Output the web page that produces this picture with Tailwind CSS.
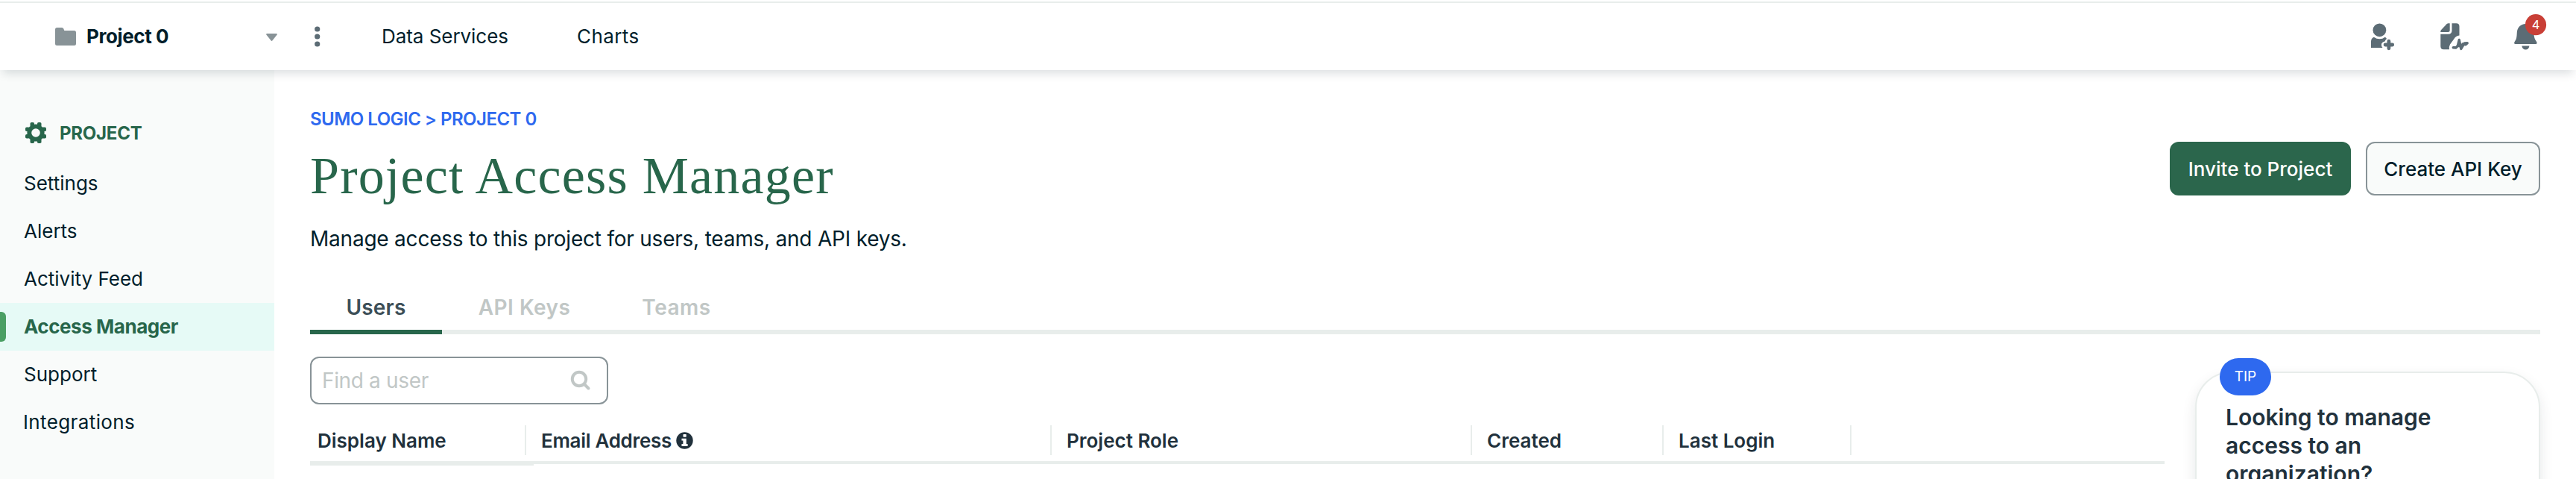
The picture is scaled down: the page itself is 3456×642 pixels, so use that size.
<!DOCTYPE html>
<html lang="en">
<head>
<meta charset="utf-8">
<title>Project Access Manager</title>
<script src="https://cdn.jsdelivr.net/npm/@tailwindcss/browser@4"></script>
</head>
<body class="bg-white">
<div class="flex flex-col h-[642px] w-[3456px] overflow-hidden font-['Inter','Liberation_Sans',sans-serif] text-[26px] text-[#001e2b]">

  <header class="relative z-10 mt-[2px] flex h-[92px] shrink-0 items-center border-t-2 border-[#e8edeb] bg-white pl-[74px] pr-[39px] shadow-[0_8px_12px_-4px_rgba(0,30,43,0.15)]">
    <svg class="w-7 h-6 fill-[#889397]" viewBox="0 0 28 24"><path d="M2.500 0H9a2.500 2.500 0 0 1 2.300 1.600L12.300 4H25.500A2.500 2.500 0 0 1 28 6.500V21.500A2.500 2.500 0 0 1 25.500 24H2.500A2.500 2.500 0 0 1 0 21.500V2.500A2.500 2.500 0 0 1 2.500 0Z"/></svg>
    <span class="-mt-px ml-[14px] w-[241px] font-bold tracking-[-0.4px]">Project 0</span>
    <svg class="mt-0.5 w-[15px] h-2.5 fill-[#889397]" viewBox="0 0 15 10"><path d="M1.300 0H13.700Q15.500 0.300 14.500 1.800L8.500 9.300Q7.500 10.500 6.500 9.300L0.500 1.800Q-0.500 0.300 1.300 0Z"/></svg>
    <svg class="ml-[50px] w-2 h-7 fill-[#5c6c75]" viewBox="0 0 8 28"><circle cx="3.700" cy="4" r="3.600"/><circle cx="3.700" cy="14" r="3.600"/><circle cx="3.700" cy="24" r="3.600"/></svg>
    <a class="-mt-px ml-[82px] w-[262px] tracking-[-0.05px]">Data Services</a>
    <a class="-mt-px tracking-[0.4px]">Charts</a>

    <div class="ml-auto -mt-1 flex gap-[58px] text-[#5c6c75]">
      <svg class="w-9 h-12" viewBox="14 8 36 48" fill="currentColor">
        <circle cx="27.400" cy="25.300" r="8.900"/>
        <path d="M16 49V40.500Q16 36.500 19.800 34.700Q23.500 37.200 27.500 37.200Q31.500 37.200 34.800 34.700Q36.500 35.500 37 37Q35 38.500 34.500 40.500Q31 41 30 44Q29.500 46.500 31.500 49Z"/>
        <path d="M39.900 40.200V49.800M35.100 45H44.700" fill="none" stroke="currentColor" stroke-width="4.800" stroke-linecap="round"/>
      </svg>
      <svg class="w-10 h-12" viewBox="108 8 40 48" fill="currentColor">
        <path d="M109.300 28V27Q109.300 26 110.200 25L117.500 17.200Q118.500 16.200 120 16.200H121.700V25.500Q121.700 28 119.200 28Z"/>
        <path d="M124.500 16.200H130.300Q134.500 16.200 134.500 20.400V32.500Q129.500 33 127.500 37L122 44.500Q120 48.500 121 51.300H113.500Q109.300 51.300 109.300 47.100V30.800H119.500Q124.500 30.800 124.500 25.800Z"/>
        <path d="M126.300 48.700Q131.500 49 132.500 46L134.300 38.500L136.800 50.500L141.300 43L145.200 42.800L143 44.800L139 44L137.500 49L135 46.500L132 46.500L130 49Z" stroke="currentColor" stroke-width="3.400" stroke-linejoin="round" stroke-linecap="round"/>
      </svg>
      <svg class="w-[46px] h-12 overflow-visible" viewBox="206 8 46 48" fill="currentColor">
        <path d="M223.300 17C229.500 17 234.500 22 234.500 28.500C234.500 34.500 235.500 37.500 237.500 40Q238.600 41.500 238.600 42.500Q238.600 44 237 44H209.700Q208.100 44 208.100 42.500Q208.100 41.500 209.200 40C211.300 37.500 211.500 34.500 211.800 28.500C212.100 22 217 17 223.300 17Z"/>
        <path d="M218.300 46.600H228.500Q227.500 51.600 223.400 51.600Q219.300 51.600 218.300 46.600Z"/>
        <circle cx="237" cy="18.200" r="14.100" fill="#c93f36"/>
        <text x="237" y="24" text-anchor="middle" font-size="16.500" fill="#fff">4</text>
      </svg>
    </div>
  </header>

  <div class="flex min-h-0 flex-1">
    <nav class="w-[368px] shrink-0 bg-[#f9fbfa] pt-[51px]">
      <div class="flex h-[68px] items-center pl-[34px] text-[24px] font-bold text-[#28664b]">
        <svg class="-mt-0.5 w-7 h-7" viewBox="-14 -14 28 28">
          <circle r="8.700" fill="none" stroke="#28664b" stroke-width="5.800"/>
          <g fill="#28664b"><g id="teeth"><rect x="-7.500" y="-14" width="5.500" height="6" rx="1.800"/><rect x="2" y="-14" width="5.500" height="6" rx="1.800"/><rect x="-7.500" y="8" width="5.500" height="6" rx="1.800"/><rect x="2" y="8" width="5.500" height="6" rx="1.800"/></g><use href="#teeth" transform="rotate(90)"/></g>
        </svg>
        <span class="-mt-px ml-[18px] tracking-[-0.25px]">PROJECT</span>
      </div>
      <a class="flex h-16 items-center pl-[32px]">Settings</a>
      <a class="flex h-16 items-center pl-[32px]">Alerts</a>
      <a class="flex h-16 items-center pl-[32px]">Activity Feed</a>
      <a class="mt-px flex h-16 items-center bg-[#e6faf6] font-bold text-[#28664b]"><span class="h-10 w-2 rounded-r-md bg-[#4a9f64]"></span><span class="-mt-px ml-6 tracking-[-0.45px]">Access Manager</span></a>
      <a class="-mt-px flex h-16 items-center pl-[32px]">Support</a>
      <a class="flex h-16 items-center pl-[31px] tracking-[0.38px]">Integrations</a>
    </nav>

    <main class="flex flex-1 flex-col pl-12 pr-12">
      <div class="mt-[48px] flex h-9 items-center text-[24px] font-semibold tracking-[-0.52px] text-[#2e69ef]">SUMO LOGIC &gt; PROJECT 0</div>
      <div class="mt-[12px] flex h-[85px] items-start">
        <h1 class="mt-[6px] font-['Liberation_Serif',serif] text-[70px] leading-[80px] tracking-[1.200px] text-[#28664b]">Project Access Manager</h1>
        <div class="ml-auto flex gap-5 font-medium">
          <button class="h-[72px] w-[243px] rounded-xl bg-[#2b664c] text-white">Invite to Project</button>
          <button class="h-[72px] w-[234px] rounded-xl border-2 border-[#889397] bg-[#f9fbfa]">Create API Key</button>
        </div>
      </div>
      <p class="mt-[25px] text-[28px] leading-10 tracking-[-0.22px]">Manage access to this project for users, teams, and API keys.</p>

      <div class="mt-[42px] flex h-[66px] shrink-0 border-b-6 border-[#e8edeb] text-[28px] font-semibold text-[#c1c7c6]">
        <div class="-mb-1.5 flex w-[177px] items-center justify-center border-b-6 border-[#28664b] text-[#3d4f58] tracking-[0.2px]">Users</div>
        <div class="flex w-[221px] items-center justify-center tracking-[0.5px]">API Keys</div>
        <div class="flex w-[187px] items-center justify-center tracking-[0.5px]">Teams</div>
      </div>

      <div class="flex">
        <section class="w-[2488px]">
          <div class="mt-[30px] flex h-16 w-[400px] items-center justify-between rounded-xl border-2 border-[#889397] pl-3.5 pr-[21px] text-[28px] tracking-[-0.35px] text-[#c1c7c6]">
            <span>Find a user</span>
            <svg class="w-7 h-7" viewBox="0 0 28 28" fill="none" stroke="#c1c7c6" stroke-linecap="round"><circle cx="12" cy="12" r="9.200" stroke-width="4"/><path d="M19.500 19.500L24.500 24.500" stroke-width="4"/></svg>
          </div>
          <div class="mt-7 flex h-[52px] border-b-4 border-[#e8edeb] font-semibold text-[#21313c]">
            <div class="relative flex h-10 w-[290px] items-center border-r-2 border-[#e8edeb] pl-[10px]">Display Name<i class="absolute left-0 top-12 h-1.5 w-[300px] bg-[#e8edeb]"></i></div>
            <div class="flex h-10 w-[705px] items-center border-r-2 border-[#e8edeb] pl-[20px] tracking-[-0.3px]">Email Address
              <svg class="ml-[6px] w-[23px] h-[23px]" viewBox="0 0 23 23"><circle cx="11.500" cy="11.500" r="11.200" fill="#21313c"/><g fill="#fff"><rect x="9.500" y="3" width="4.300" height="3.800" rx=".8"/><path d="M7.500 8.700H13.800V16H15.600V19H7.500V16H9.400V11.500H7.500Z"/></g></svg>
            </div>
            <div class="flex h-10 w-[564px] items-center border-r-2 border-[#e8edeb] pl-[20px]">Project Role</div>
            <div class="flex h-10 w-[257px] items-center border-r-2 border-[#e8edeb] pl-5">Created</div>
            <div class="flex h-10 w-[252px] items-center border-r-2 border-[#e8edeb] pl-[20px]">Last Login</div>
          </div>
        </section>
        <aside class="relative ml-[41px] mt-[50px] h-[300px] w-[463px] rounded-[48px] border-2 border-[#e8edeb] bg-white pl-[39px] pt-10 shadow-[0_8px_20px_-2px_rgba(0,30,43,0.12)]">
          <span class="absolute left-[31px] -top-5 flex h-[50px] w-[69px] items-center justify-center rounded-[25px] bg-[#2e69ef] text-[19px] text-white">TIP</span>
          <h2 class="w-[320px] text-[30px] font-semibold leading-[38px] text-[#21313c]">Looking to manage access to an organization?</h2>
        </aside>
      </div>
    </main>
  </div>
</div>
</body>
</html>
